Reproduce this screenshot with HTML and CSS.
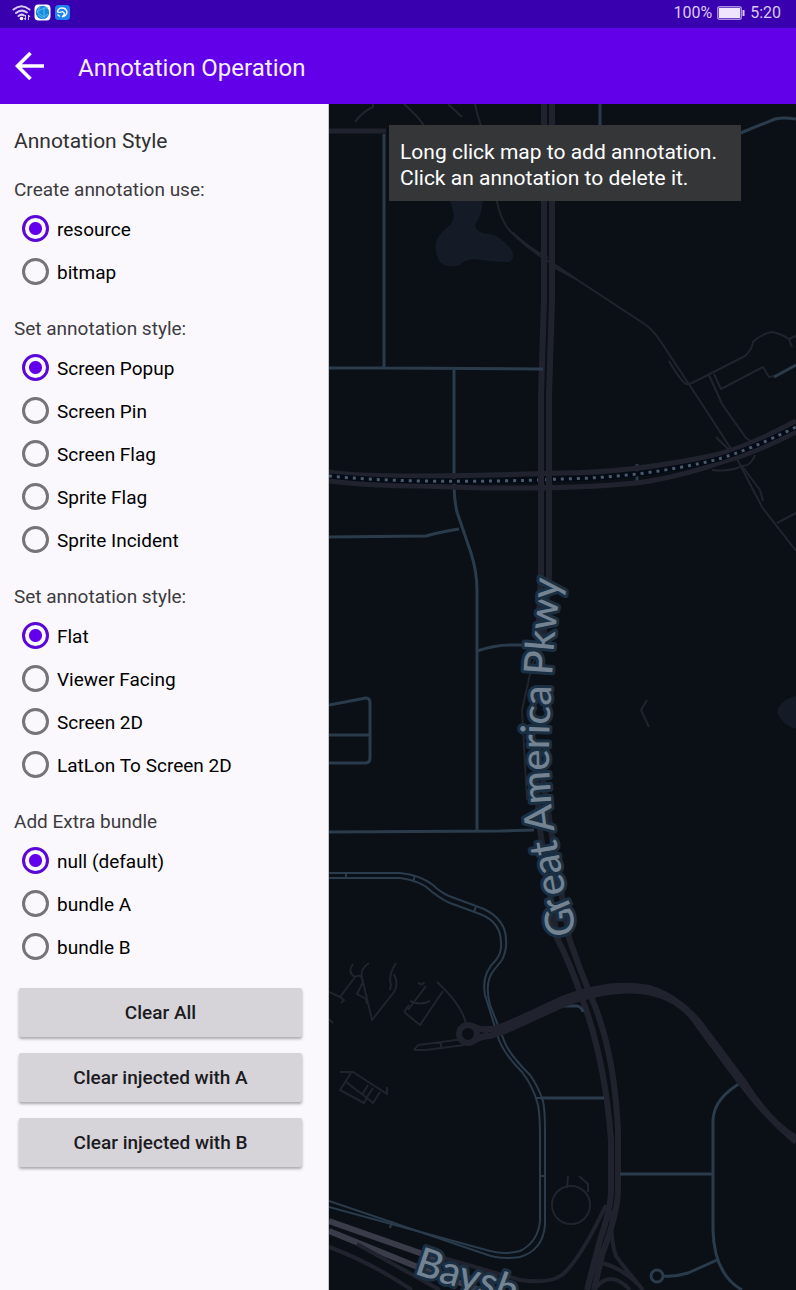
FILE: index.html
```html
<!DOCTYPE html>
<html lang="en">
<head>
<meta charset="utf-8">
<meta name="viewport" content="width=device-width, initial-scale=1">
<title>Annotation Operation</title>
<link rel="stylesheet" href="styles.css">
</head>
<body>
<div class="status">
  <div class="status-side">
    <svg class="wifi" viewBox="0 0 20 18" aria-hidden="true">
      <g fill="none" stroke="#d8caf5" stroke-width="2" stroke-linecap="round"><path d="M1.500 5.500Q9.500-1 17.500 5.500"/><path d="M4 9Q9.500 4.500 15 8.500"/><path d="M6.500 12Q9.500 9.500 12 11.500"/></g>
      <circle cx="9.500" cy="14.500" r="1.800" fill="#fff"/><path d="M13.500 11v5m-1.500-2l1.500 2M16.500 16v-5m1.500 2l-1.500-2" stroke="#d8caf5" fill="none"/>
    </svg>
    <svg class="app-icon" viewBox="0 0 17 17" aria-hidden="true"><rect x=".5" y=".5" width="16" height="16" rx="4" fill="#fff"/><circle cx="8.500" cy="8.500" r="6.700" fill="#158bdc"/><path d="M3 8l7-4v9zM10 4h4M10 13l4-3M3 8l3-5M4 11l6 4" fill="none" stroke="#72c3f5" stroke-width=".8"/></svg>
    <svg class="app-icon app-icon-next" viewBox="0 0 17 17" aria-hidden="true"><rect x="1" y="1" width="15" height="15" rx="3.500" fill="#1d83ef"/><path d="M3.500 8Q4 4 8 4Q12 4 13 8Q13 11.500 8 13Q10.500 11 10.500 9.500L8.500 7.500Q5.500 9 3.500 8ZM3.500 10.500L6 12.500" fill="none" stroke="#fff" stroke-width="1.300"/></svg>
  </div>
  <div class="status-side">
    <span>100%</span>
    <svg class="battery" viewBox="0 0 28 14" aria-hidden="true"><rect x=".75" y=".75" width="23.500" height="12.500" rx="2" fill="none" stroke="#a98be0" stroke-width="1.500"/><rect x="2" y="2" width="21" height="10" fill="#eee5fa"/><path d="M26.500 4v6" stroke="#d8caf5" stroke-width="2"/></svg>
    <span>5:20</span>
  </div>
</div>
<header class="bar">
  <button class="back" type="button" aria-label="Back"><svg viewBox="0 0 30 30" aria-hidden="true"><path d="M29 15H3M15.500 2L2.500 15l13 13" fill="none" stroke="#fff" stroke-width="3.600"/></svg></button>
  <h1 class="bar-title">Annotation Operation</h1>
</header>
<main class="content">
  <form class="panel">
    <h2 class="panel-title">Annotation Style</h2>
    <fieldset class="group"><legend>Create annotation use:</legend>
      <label><input type="radio" name="source" checked>resource</label>
      <label><input type="radio" name="source">bitmap</label>
    </fieldset>
    <fieldset class="group"><legend>Set annotation style:</legend>
      <label><input type="radio" name="style" checked>Screen Popup</label>
      <label><input type="radio" name="style">Screen Pin</label>
      <label><input type="radio" name="style">Screen Flag</label>
      <label><input type="radio" name="style">Sprite Flag</label>
      <label><input type="radio" name="style">Sprite Incident</label>
    </fieldset>
    <fieldset class="group"><legend>Set annotation style:</legend>
      <label><input type="radio" name="facing" checked>Flat</label>
      <label><input type="radio" name="facing">Viewer Facing</label>
      <label><input type="radio" name="facing">Screen 2D</label>
      <label><input type="radio" name="facing">LatLon To Screen 2D</label>
    </fieldset>
    <fieldset class="group"><legend>Add Extra bundle</legend>
      <label><input type="radio" name="bundle" checked>null (default)</label>
      <label><input type="radio" name="bundle">bundle A</label>
      <label><input type="radio" name="bundle">bundle B</label>
    </fieldset>
    <div class="actions">
      <button type="button">Clear All</button>
      <button type="button">Clear injected with A</button>
      <button type="button">Clear injected with B</button>
    </div>
  </form>
  <section class="map" aria-label="Map">
    <svg class="map-canvas" viewBox="329 104 467 1186" preserveAspectRatio="xMidYMid slice">
      <g class="water">
        <path d="M450 200H483Q482 215 475 225Q477 234 491 234Q500 236 511 249Q516 257 510 262Q490 262 475 259Q463 260 460 265Q448 269 440 262Q433 250 437 239Q441 232 450 225Q455 219 453 211Z"/>
        <path d="M796 696Q780 700 777 712Q782 725 796 729Z"/>
      </g>
      <g class="path">
        <path d="M355 122Q362 112 373 107V104M404 104Q417 115 425 127M448 104L462 117"/>
        <path d="M475 104Q478 120 490 150M495 190Q499 222 514 235Q535 255 560 268L582 283L646 325Q655 332 663 345L702 404L735 455L762 507L796 551"/>
        <path d="M512 232Q530 249 548 258M550 265L576 279M669 361Q680 380 686 384Q690 384 692 383L745 356Q752 350 753 342Q760 335 771 332Q780 333 789 339L796 336M789 339L792 347M709 375L722 404L746 438L754 443M714 374L721 389L763 367L769 377L774 376M716 437L731 452M712 470Q730 472 742 466L760 490L763 501M742 466Q751 466 755 455M777 523L796 513"/>
        <path d="M647 700L641 710L649 727M541 645L532 665L522 710L527 800"/>
        <path d="M353 964Q347 972 355 977L340 997L329 992M340 997L344 1000L341 1003M369 963Q358 970 363 982L372 1020L394 992Q399 984 394 974M396 963Q388 975 391 985L390 990M355 977Q362 973 363 982L357 994L366 999L367 1004M418 983Q424 986 424 982M426 986L408 1010M404 1012L420 1025L443 991M410 1001Q420 1006 430 1001M404 1012L409 1005M437 982Q462 1005 466 1024M414 1050L418 1045L464 1039M414 1050H426L464 1045M441 1042V1047M340 1072H353L387 1094V1087M351 1073L340 1090L364 1103L367 1098L373 1103L380 1092M346 1082L367 1098M368 1085L362 1095M373 1088L367 1097M329 1019L333 1023"/>
        <circle cx="571" cy="1205" r="19"/><path d="M568 1176L567 1188M579 1176L588 1184V1192"/>
      </g>
      <g class="major wide"><path d="M544 100V300L541 395V575L538 640M552 100V300L549 395V575L543 640"/><path d="M536 780L540 830L557 938Q570 963 582 998Q605 1060 611 1140V1190Q611 1208 600 1240L587 1290M543 780L551 830L569 938Q579 968 592 999Q614 1050 618 1130V1190Q618 1212 602 1255L594 1290"/></g>
      <g class="minor">
        <path d="M384 134V367M329 368H384L543 369M454 369V480Q454 500 457 512L471 553Q477 572 477 590V830M329 537L426 536Q440 532 459 529M477 651Q495 645 510 645H530M600 104V127M738 134L775 119Q783 117 796 119M774 377L796 365"/>
        <path d="M329 705L366 698Q370 698 370 703V758Q370 763 365 763H329M329 735H370M329 832L500 831L534 830M541 1098H604M620 1174H713M742 1082Q714 1098 713 1120V1230Q714 1274 742 1290M663 1276Q675 1277 688 1273L717 1260M562 1006H577Q582 1007 583 1012M637 464V482"/>
        <circle cx="657" cy="1276" r="6"/>
      </g>
      <g class="minor thin">
        <path d="M329 873H400Q420 875 433 885Q440 892 449 896L484 909Q506 920 506 940Q507 950 502 960L494 970Q484 982 490 1005L505 1043Q510 1055 530 1075Q538 1086 543 1101Q545 1110 545 1130V1225Q543 1250 520 1257Q500 1260 485 1254L329 1201"/>
        <path d="M329 878H400Q415 880 425 886Q440 899 450 903L480 914Q501 922 501 943Q502 952 496 960Q481 974 485 995L499 1040Q505 1055 522 1072Q533 1086 538 1105Q540 1115 540 1135V1221Q538 1242 520 1251Q505 1255 490 1251L329 1207"/>
        <path d="M346 873V878M415 875L413 882M476 906L474 912M536 1098H542M540 1176H546M392 1221L390 1228"/>
      </g>
      <g class="major"><path d="M329 472Q350 476 420 476Q500 475 560 473Q630 473 715 455Q745 448 796 421M329 481Q370 486 420 486L480 488Q600 489 650 481Q690 474 728 460Q750 455 796 432"/></g>
      <path class="rail-bed" d="M329 476Q370 480 420 481Q500 482 560 479Q640 478 715 460Q750 450 796 427"/>
      <path class="rail" d="M329 476Q370 480 420 481Q500 482 560 479Q640 478 715 460Q750 450 796 427"/>
      <g class="major wide"><path d="M541 462V498M549 462V498"/></g>
      <path class="major" d="M329 131H386"/>
      <g class="major loop"><path d="M480 1029H494Q510 1024 562 999Q610 980 649 988Q676 996 699 1022L744 1082Q770 1123 796 1138M480 1037Q493 1036 505 1031L562 1005Q605 988 640 991Q680 995 700 1028L740 1082Q765 1116 796 1142"/><circle cx="468" cy="1034" r="9"/><path d="M472 1026Q480 1030 488 1030M472 1042Q482 1035 492 1036"/></g>
      <g class="highway"><path d="M329 1221L440 1260M329 1231L430 1272L480 1290"/></g>
      <g class="ramp"><path d="M329 1247Q370 1262 412 1290M357 1244L440 1290M430 1254L520 1280Q550 1284 562 1275Q580 1260 606 1205M612 1210Q610 1240 616 1256Q620 1262 643 1290M602 1263Q622 1268 640 1286M594 1290Q610 1268 630 1290"/></g>
      <path id="parkway" class="guide" d="M574 935Q575 912 566 895Q558 850 554 825Q546 770 551 700Q552 660 557 615L562 555"/>
      <path id="bayshore" class="guide" d="M413 1273Q450 1286 482 1294L560 1323"/>
      <text class="road-name"><textPath href="#parkway">Great America Pkwy</textPath></text>
      <text class="road-name"><textPath href="#bayshore">Baysh</textPath></text>
    </svg>
    <p class="toast">Long click map to add annotation.<br>Click an annotation to delete it.</p>
  </section>
</main>
</body>
</html>
```

FILE: styles.css
```css
* { box-sizing: border-box; }
body { margin: 0; min-height: 100vh; display: flex; flex-direction: column; font-family: Roboto, "Liberation Sans", sans-serif; background: #faf8fc; color: #000; }

.status { height: 28px; padding: 0 15px 3px 12px; display: flex; align-items: center; justify-content: space-between; background: #3900b0; color: #d8caf5; font-size: 16px; line-height: 20px; }
.status-side { display: flex; align-items: center; }
.wifi { width: 20px; height: 18px; }
.app-icon { width: 17px; height: 17px; margin-left: 2px; }
.app-icon-next { margin-left: 3px; }
.battery { width: 28px; height: 14px; margin: 0 5px; }

.bar { height: 76px; padding: 0 15px; display: flex; align-items: center; background: #6200e9; }
.back { width: 30px; height: 30px; padding: 0; border: 0; background: none; }
.back svg { display: block; width: 30px; height: 30px; }
.bar-title { margin: 3px 0 0 33px; color: #f5effd; font-size: 24px; line-height: 30px; font-weight: 400; }

.content { flex: 1; display: flex; }
.panel { flex: 0 0 329px; padding: 22px 14px; border-right: 1px solid #c5c6ca; }
.panel-title { margin: 0 0 22px; color: #303032; font-size: 21px; line-height: 30px; font-weight: 400; }
.group { margin: 0 0 23px; padding: 0; border: 0; font-size: 19px; line-height: 24px; }
.group:last-of-type { margin-bottom: 19px; }
.group legend { margin-bottom: 6px; padding: 0; color: #3c3b3e; }
.group label { display: flex; align-items: center; height: 43px; padding-left: 8px; }
.group input { appearance: none; width: 27px; height: 27px; margin: 0 8px 2px 0; border: 3px solid #757477; border-radius: 50%; background: transparent; }
.group input:checked { border-color: #5a08d8; background: radial-gradient(circle, #6200ee 6px, transparent 7px); }
.actions { display: flex; flex-direction: column; gap: 16px; padding: 0 12px 0 5px; }
.actions button { height: 49px; padding: 0; border: 0; border-radius: 2px; background: #d6d4d8; box-shadow: 0 2px 3px #aaa8ad; color: #1c1b1f; font: 500 19px/24px Roboto, "Liberation Sans", sans-serif; }

.map { flex: 1; position: relative; overflow: hidden; background: #0b1016; }
.map-canvas { position: absolute; inset: 0; width: 100%; height: 100%; }
.toast { position: absolute; top: 21px; left: 60px; margin: 0; padding: 14px 24px 10px 11px; background: #353638; color: #fff; font-size: 21px; line-height: 26px; white-space: nowrap; }

.map-canvas g, .rail, .rail-bed, .guide, path.major { fill: none; stroke-linejoin: round; }
.map-canvas .water { fill: #141b26; }
.path { stroke: #20242d; stroke-width: 2; }
.minor { stroke: #2a3b4c; stroke-width: 3; }
.minor.thin { stroke-width: 2; }
.major { stroke: #20232e; stroke-width: 5; }
.major.wide { stroke-width: 6; }
.major.loop { stroke-width: 6; }
.rail-bed { stroke: #040b17; stroke-width: 5; }
.rail { stroke: #4b5b6b; stroke-width: 3; stroke-dasharray: 3 5; }
.highway { stroke: #3b3c49; stroke-width: 6; }
.ramp { stroke: #20232e; stroke-width: 4; }
.road-name { font-family: Lato, sans-serif; font-size: 40px; font-weight: 500; fill: #748392; stroke: #1b2f42; stroke-width: 6; stroke-linejoin: round; paint-order: stroke; }
```
